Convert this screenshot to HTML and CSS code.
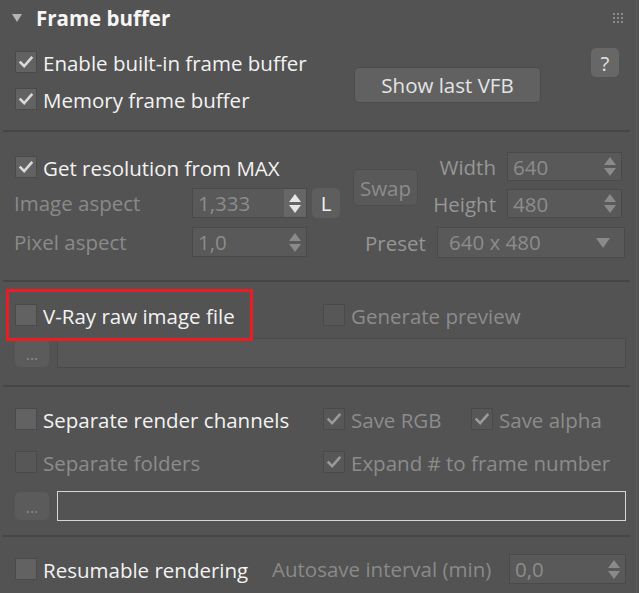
FILE: index.html
```html
<!DOCTYPE html>
<html>
<head>
<meta charset="utf-8">
<link rel="stylesheet" href="styles.css">
</head>
<body>
<div class="panel">
  <div class="header">
    <span class="tri"></span>
    <span class="title">Frame buffer</span>
    <svg class="grip" width="10" height="10" viewBox="0 0 10 10">
      <g fill="#8a8a8a">
        <rect x="0" y="0" width="2" height="2"/><rect x="4" y="0" width="2" height="2"/><rect x="8" y="0" width="2" height="2"/>
        <rect x="0" y="4" width="2" height="2"/><rect x="4" y="4" width="2" height="2"/><rect x="8" y="4" width="2" height="2"/>
        <rect x="0" y="8" width="2" height="2"/><rect x="4" y="8" width="2" height="2"/><rect x="8" y="8" width="2" height="2"/>
      </g>
    </svg>
  </div>

  <div class="sec sec1">
    <div class="s1-left">
      <div class="cbrow"><span class="cb on"><svg viewBox="0 0 22 22"><path d="M5 11.5 L9 15.5 L17 6.5"/></svg></span><span class="lbl">Enable built-in frame buffer</span></div>
      <div class="cbrow"><span class="cb on"><svg viewBox="0 0 22 22"><path d="M5 11.5 L9 15.5 L17 6.5"/></svg></span><span class="lbl">Memory frame buffer</span></div>
    </div>
    <div class="btn vfb">Show last VFB</div>
    <div class="btn help">?</div>
  </div>
  <div class="sep"></div>

  <div class="sec sec2">
    <div class="s2-left">
      <div class="cbrow"><span class="cb on"><svg viewBox="0 0 22 22"><path d="M5 11.5 L9 15.5 L17 6.5"/></svg></span><span class="lbl">Get resolution from MAX</span></div>
      <div class="frow r-img">
        <span class="flabel">Image aspect</span>
        <div class="spin">
          <span class="val">1,333</span>
          <span class="arrows bright"><i class="up"></i><i class="dn"></i></span>
        </div>
        <div class="btn lbtn">L</div>
      </div>
      <div class="frow r-pix">
        <span class="flabel">Pixel aspect</span>
        <div class="spin">
          <span class="val">1,0</span>
          <span class="arrows"><i class="up"></i><i class="dn"></i></span>
        </div>
      </div>
    </div>
    <div class="s2-right">
      <div class="wh-block">
        <div class="btn swap">Swap</div>
        <div class="wh-col">
          <div class="whrow"><span class="whlabel">Width</span>
            <div class="spin wh"><span class="val">640</span><span class="arrows"><i class="up"></i><i class="dn"></i></span></div>
          </div>
          <div class="whrow"><span class="whlabel">Height</span>
            <div class="spin wh"><span class="val">480</span><span class="arrows"><i class="up"></i><i class="dn"></i></span></div>
          </div>
        </div>
      </div>
      <div class="preset-row">
        <span class="plabel">Preset</span>
        <div class="dropdown"><span class="val">640 x 480</span><i class="dd"></i></div>
      </div>
    </div>
  </div>
  <div class="sep"></div>

  <div class="sec sec3">
    <div class="row2c">
      <div class="c-left"><div class="cbrow"><span class="cb"></span><span class="lbl">V-Ray raw image file</span></div></div>
      <div class="cbrow dis"><span class="cb"></span><span class="lbl">Generate preview</span></div>
    </div>
    <div class="pathrow">
      <div class="btn dots">...</div>
      <div class="pathfield"></div>
    </div>
    <div class="redbox"></div>
  </div>
  <div class="sep"></div>

  <div class="sec sec4">
    <div class="row2c">
      <div class="c-left"><div class="cbrow"><span class="cb"></span><span class="lbl">Separate render channels</span></div></div>
      <div class="c-mid"><div class="cbrow dis"><span class="cb on"><svg viewBox="0 0 22 22"><path d="M5 11.5 L9 15.5 L17 6.5"/></svg></span><span class="lbl">Save RGB</span></div></div>
      <div class="cbrow dis"><span class="cb on"><svg viewBox="0 0 22 22"><path d="M5 11.5 L9 15.5 L17 6.5"/></svg></span><span class="lbl">Save alpha</span></div>
    </div>
    <div class="row2c r-second">
      <div class="c-left"><div class="cbrow dis"><span class="cb"></span><span class="lbl">Separate folders</span></div></div>
      <div class="cbrow dis"><span class="cb on"><svg viewBox="0 0 22 22"><path d="M5 11.5 L9 15.5 L17 6.5"/></svg></span><span class="lbl">Expand # to frame number</span></div>
    </div>
    <div class="pathrow p2">
      <div class="btn dots">...</div>
      <div class="pathfield light"></div>
    </div>
  </div>
  <div class="sep"></div>

  <div class="sec sec5">
    <div class="c-res"><div class="cbrow"><span class="cb"></span><span class="lbl">Resumable rendering</span></div></div>
    <span class="autolabel">Autosave interval (min)</span>
    <div class="spin auto"><span class="val">0,0</span><span class="arrows"><i class="up"></i><i class="dn"></i></span></div>
  </div>
</div>
</body>
</html>
```

FILE: styles.css
```css
* { box-sizing: border-box; }
html, body {
  margin: 0;
  padding: 0;
  background: #535353;
}
body {
  width: 639px;
  height: 593px;
  overflow: hidden;
  font-family: "Open Sans", "Noto Sans", sans-serif;
  font-size: 20.5px;
  color: #f2f2f2;
}
.panel {
  width: 637px;
  height: 593px;
  border-right: 1px solid #5c5c5c;
}

/* header */
.header {
  height: 40px;
  display: flex;
  align-items: flex-start;
  position: relative;
}
.tri {
  width: 0;
  height: 0;
  border-left: 5.5px solid transparent;
  border-right: 5.5px solid transparent;
  border-top: 8px solid #b4b4b4;
  margin: 14px 0 0 12px;
}
.title {
  font-weight: 700;
  line-height: 36px;
  margin-left: 14px;
  color: #f6f6f6;
}
.grip {
  margin: 13px 0 0 auto;
  margin-right: 13px;
}

/* common */
.sep {
  height: 2px;
  background: #464646;
  margin: 0 6px 0 3px;
}
.cbrow {
  display: flex;
  align-items: center;
  height: 22px;
}
.cb {
  width: 22px;
  height: 22px;
  flex: none;
  background: #626262;
  border: 1px solid #4a4a4a;
  display: flex;
  align-items: center;
  justify-content: center;
}
.cb svg { width: 20px; height: 20px; }
.cb svg path {
  fill: none;
  stroke: #dadada;
  stroke-width: 2.8;
  stroke-linecap: square;
}
.lbl {
  margin-left: 6px;
  line-height: 22px;
  white-space: nowrap;
  padding-top: 1px;
}
.dis .cb { background: #575757; border-color: #4a4a4a; }
.dis .cb svg path { stroke: #9a9a9a; }
.dis .lbl { color: #8c8c8c; }

.btn {
  display: flex;
  align-items: center;
  justify-content: center;
  border-radius: 5px;
  flex: none;
}

/* section 1 */
.sec1 {
  height: 90px;
  display: flex;
  align-items: flex-start;
}
.s1-left {
  width: 354px;
  padding: 11px 0 0 15px;
  display: flex;
  flex-direction: column;
  gap: 15px;
}
.vfb {
  margin-top: 27px;
  width: 187px;
  height: 36px;
  background: #616161;
  border: 1px solid #4b4b4b;
  color: #e4e4e4;
}
.help {
  margin: 8px 17px 0 auto;
  width: 28px;
  height: 29px;
  background: #676767;
  color: #e2e2e2;
}

/* section 2 */
.sec2 {
  height: 148px;
  display: flex;
  align-items: flex-start;
}
.s2-left {
  width: 353px;
  padding: 24px 0 0 0;
}
.s2-left .cbrow { margin-left: 15px; }
.frow {
  display: flex;
  align-items: center;
  height: 30px;
}
.r-img { margin-top: 10px; }
.r-pix { margin-top: 9px; }
.flabel {
  width: 192px;
  padding-left: 14px;
  color: #8a8a8a;
  white-space: nowrap;
}
.spin {
  width: 115px;
  height: 30px;
  background: #595959;
  border: 1px solid #4a4a4a;
  display: flex;
  align-items: stretch;
  flex: none;
}
.val {
  flex: 1;
  padding-left: 5px;
  color: #8c8c8c;
  line-height: 28px;
  white-space: nowrap;
}
.arrows {
  width: 22px;
  display: flex;
  flex-direction: column;
  align-items: center;
  justify-content: center;
  gap: 3px;
}
.arrows.bright { background: #666666; }
.arrows .up {
  width: 0; height: 0;
  border-left: 6px solid transparent;
  border-right: 6px solid transparent;
  border-bottom: 8px solid #8a8a8a;
}
.arrows .dn {
  width: 0; height: 0;
  border-left: 6px solid transparent;
  border-right: 6px solid transparent;
  border-top: 8px solid #8a8a8a;
}
.arrows.bright .up { border-bottom-color: #e6e6e6; }
.arrows.bright .dn { border-top-color: #e6e6e6; }
.lbtn {
  margin-left: 5px;
  width: 28px;
  height: 30px;
  background: #5e5e5e;
  color: #f0f0f0;
}
.s2-right {
  padding-top: 20px;
  width: 275px;
}
.wh-block {
  display: flex;
  align-items: flex-start;
}
.swap {
  margin-top: 17px;
  width: 65px;
  height: 37px;
  background: #595959;
  border: 1px solid #4d4d4d;
  color: #8c8c8c;
}
.wh-col {
  display: flex;
  flex-direction: column;
  gap: 8px;
}
.whrow {
  display: flex;
  align-items: center;
  height: 29px;
}
.whlabel {
  width: 78px;
  text-align: right;
  margin-right: 11px;
  color: #969696;
}
.spin.wh { height: 29px; }
.preset-row {
  margin-top: 9px;
  display: flex;
  align-items: center;
  height: 31px;
}
.plabel {
  width: 84px;
  padding-left: 12px;
  color: #969696;
}
.dropdown {
  width: 188px;
  height: 31px;
  background: #595959;
  border: 1px solid #4a4a4a;
  display: flex;
  align-items: center;
}
.dropdown .val { padding-left: 11px; line-height: 29px; }
.dd {
  width: 0; height: 0;
  border-left: 7px solid transparent;
  border-right: 7px solid transparent;
  border-top: 10px solid #8a8a8a;
  margin-right: 14px;
}

/* section 3 */
.sec3 {
  height: 103px;
  padding-top: 22px;
  position: relative;
}
.row2c {
  display: flex;
  align-items: center;
  padding-left: 15px;
}
.c-left { width: 308px; }
.c-mid { width: 148px; }
.pathrow {
  display: flex;
  align-items: center;
  padding-left: 15px;
  margin-top: 12px;
  height: 30px;
}
.dots {
  width: 34px;
  height: 28px;
  background: #5b5b5b;
  color: #8c8c8c;
  font-size: 16px;
  line-height: 1;
  padding-top: 2px;
}
.pathfield {
  margin-left: 8px;
  width: 569px;
  height: 30px;
  background: #575757;
  border: 1px solid #4a4a4a;
}
.pathfield.light {
  background: #535353;
  border-color: #d6d6d6;
}
.redbox {
  position: absolute;
  left: 6px;
  top: 7px;
  width: 247px;
  height: 52px;
  border: 3px solid #ed1c24;
}

/* section 4 */
.sec4 {
  height: 148px;
  padding-top: 21px;
}
.r-second { margin-top: 21px; }
.pathrow.p2 { margin-top: 18px; }

/* section 5 */
.sec5 {
  display: flex;
  align-items: center;
  padding: 17px 0 0 15px;
}
.c-res { width: 257px; }
.autolabel {
  width: 237px;
  color: #8a8a8a;
  white-space: nowrap;
}
.spin.auto { width: 117px; }
```
